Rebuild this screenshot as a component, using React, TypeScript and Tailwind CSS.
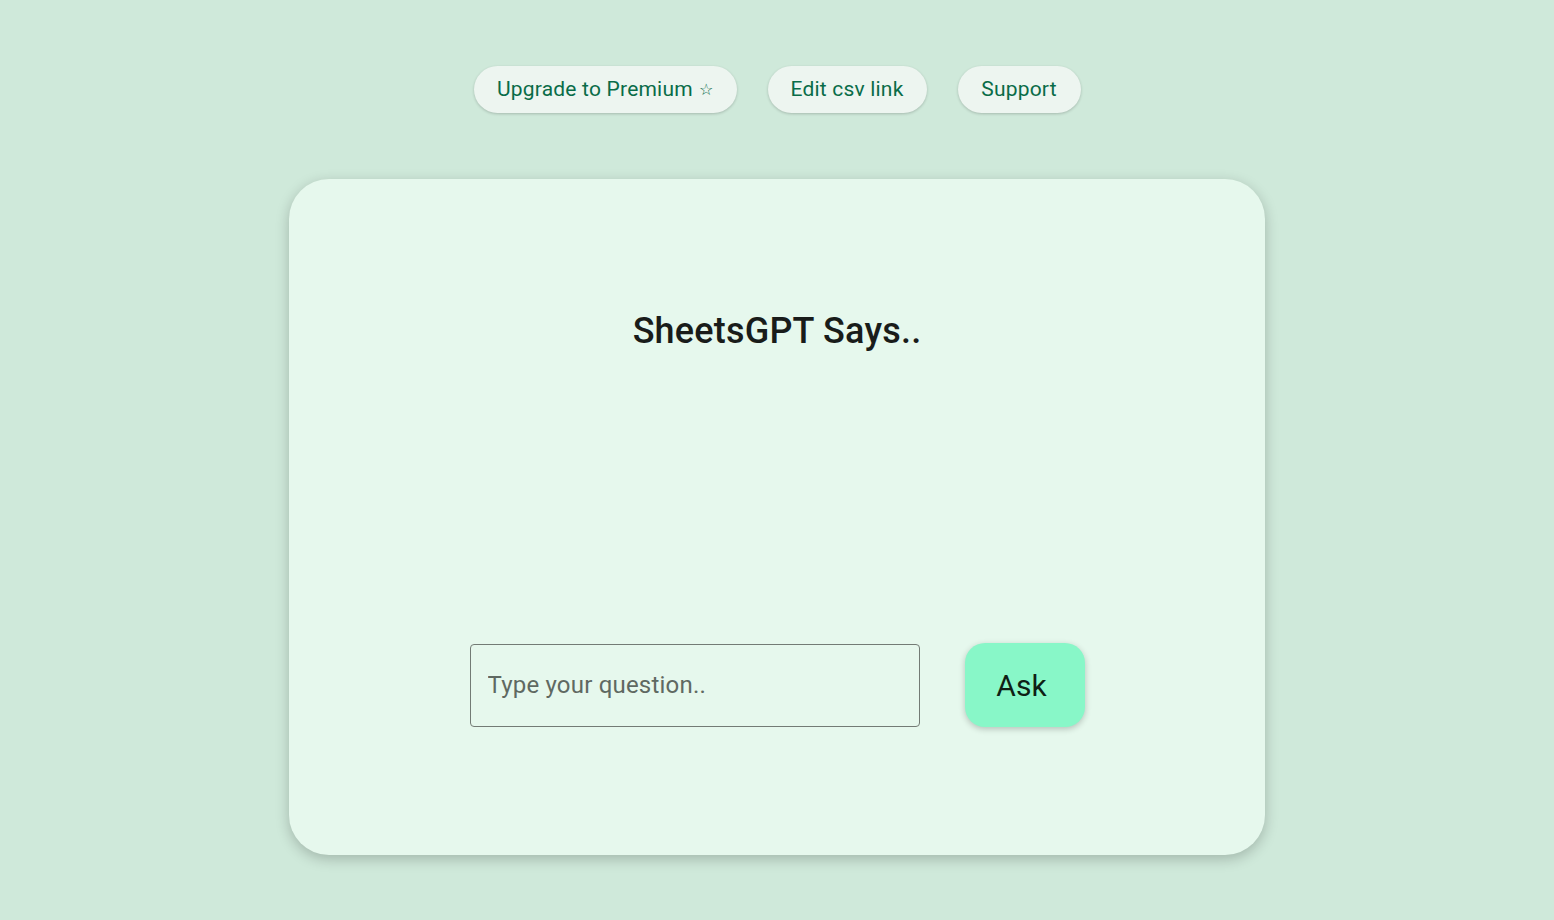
import React from "react";

export default function App() {
  return (
    <div
      className="min-h-[920px] w-full bg-[#cfe9da] flex flex-col items-center"
      style={{ fontFamily: "Roboto, 'Noto Sans', sans-serif" }}
    >
      <div className="flex gap-[31px] mt-[66px]">
        <button className="h-[47px] w-[263px] rounded-full bg-[#edf5f0] text-[#096c48] text-[21px] tracking-[0.2px] shadow-[0_1px_3px_rgba(0,0,0,0.2)] flex items-center justify-center">
          Upgrade to Premium <span className="ml-[6px] text-[16px]">☆</span>
        </button>
        <button className="h-[47px] w-[159px] rounded-full bg-[#edf5f0] text-[#096c48] text-[21px] tracking-[0.2px] shadow-[0_1px_3px_rgba(0,0,0,0.2)] flex items-center justify-center">
          Edit csv link
        </button>
        <button className="h-[47px] w-[123px] rounded-full bg-[#edf5f0] text-[#096c48] text-[21px] tracking-[0.2px] shadow-[0_1px_3px_rgba(0,0,0,0.2)] flex items-center justify-center">
          Support
        </button>
      </div>
      <div className="mt-[66px] w-[976px] h-[676px] rounded-[40px] bg-[#e6f8ed] shadow-[0_4px_14px_rgba(0,0,0,0.22)] flex flex-col items-center">
        <h1 className="mt-[129px] text-[36px] leading-[46px] font-medium tracking-[0.2px] text-[#191c1a]">
          SheetsGPT Says..
        </h1>
        <div className="mt-[289px] flex items-center gap-[45px]">
          <input
            className="w-[450px] h-[83px] rounded-[4px] border border-[#737b75] bg-transparent px-[17px] text-[24px] tracking-[0.2px] text-[#191c1a] placeholder:text-[#5f6962] outline-none"
            placeholder="Type your question.."
          />
          <button className="w-[120px] h-[84px] rounded-[20px] bg-[#88f7c8] text-[30px] text-[#0f1f15] shadow-[0_2px_6px_rgba(0,0,0,0.22)] pr-[6px]">
            Ask
          </button>
        </div>
      </div>
    </div>
  );
}
